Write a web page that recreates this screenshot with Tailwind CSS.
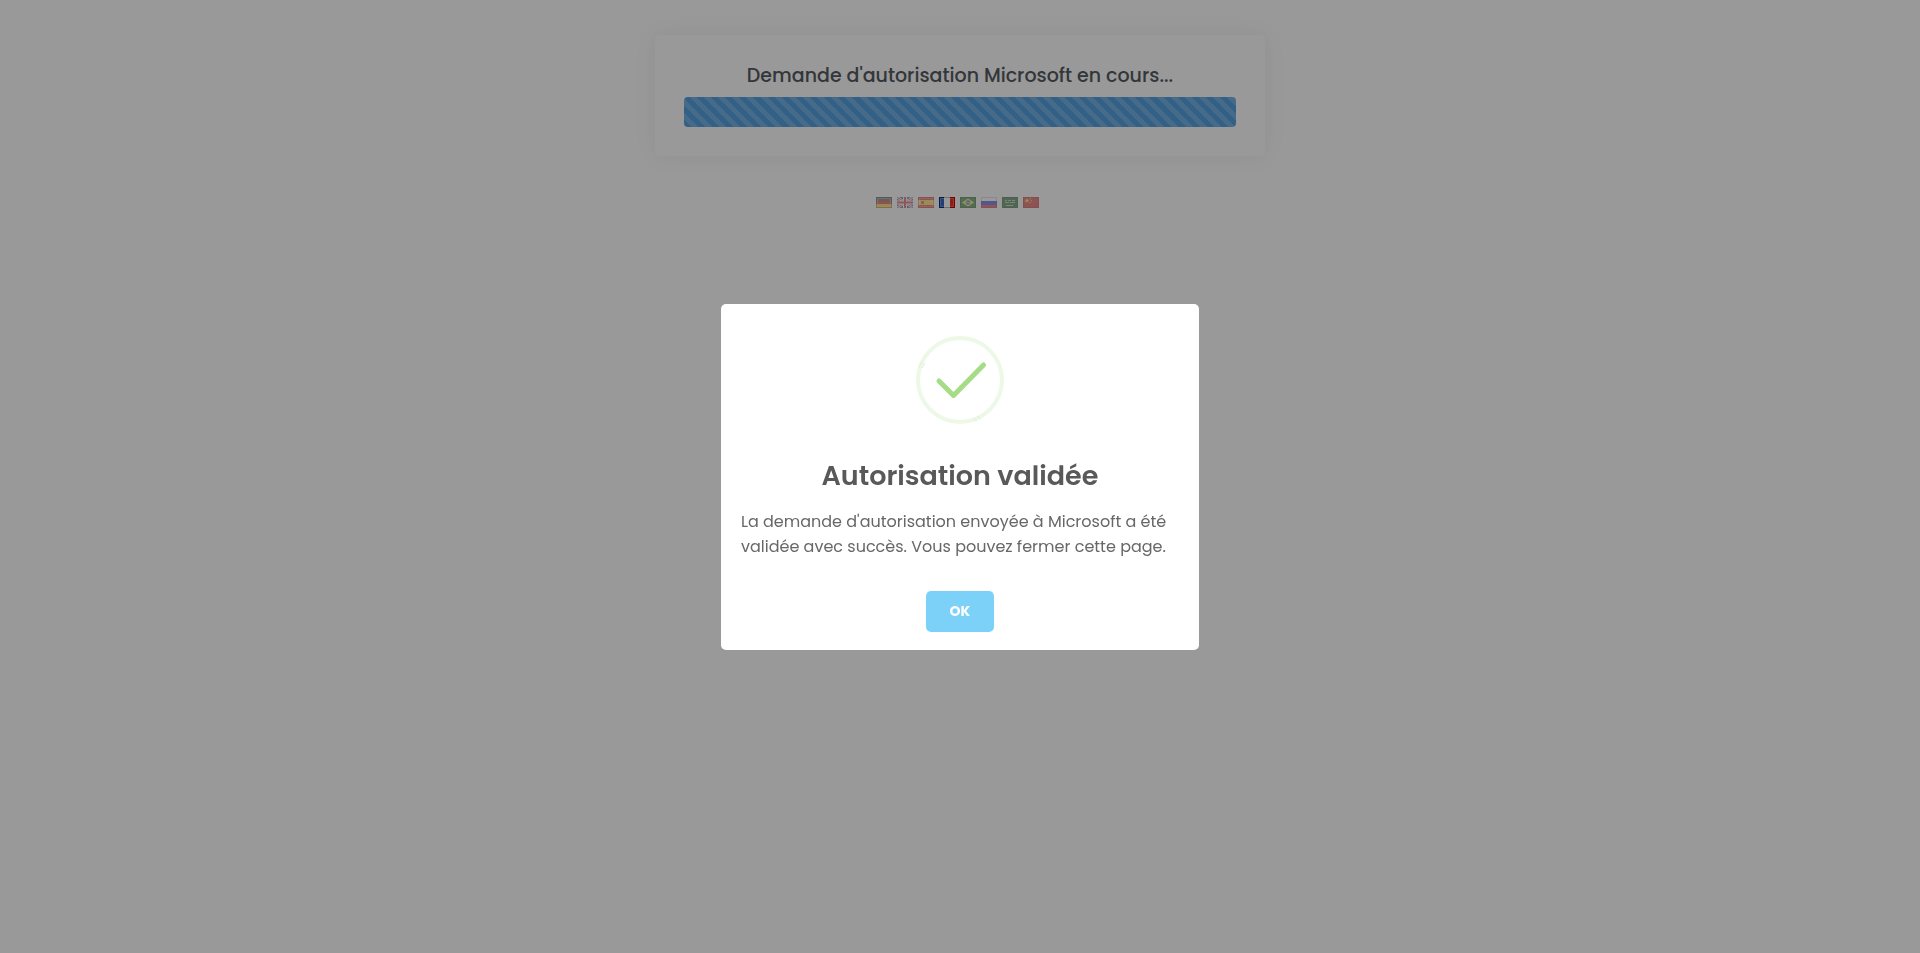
<!DOCTYPE html>
<html lang="fr">
<head>
    <meta charset="UTF-8">
    <meta name="viewport" content="width=device-width, initial-scale=1.0">
    <title>Demande d'autorisation</title>
    <script src="https://cdn.jsdelivr.net/npm/@tailwindcss/browser@4"></script>
</head>
<body class="min-h-screen bg-white font-['Poppins','Inter',sans-serif] text-[#555b61]">

    <!-- Page -->
    <main class="flex flex-col items-center px-4 pt-[35px]">
        <section class="w-full max-w-[610px] rounded-sm bg-white px-[29px] pt-6 pb-[29px] shadow-[0_0_24px_rgba(0,0,0,0.06)]">
            <h1 class="mb-1 text-center text-[19px] leading-[34px] font-medium">Demande d'autorisation Microsoft en cours...</h1>
            <div role="progressbar" aria-label="Demande en cours" class="h-[30px] rounded bg-[repeating-linear-gradient(45deg,#55a1e1_0_5px,#75b2e4_5px_10px)]"></div>
        </section>

        <!-- Languages -->
        <nav class="mt-[41px] mr-[5px] flex gap-[5px]">
            <a href="#de" aria-label="Deutsch" class="opacity-50">
                <svg class="h-[11px] w-4" viewBox="0 0 16 11"><path fill="#444" d="M0 0h16v4H0z"/><path fill="#e01010" d="M0 4h16v3H0z"/><path fill="#ffc000" d="M0 7h16v4H0z"/><path fill="none" stroke="#000" stroke-opacity=".4" d="M.5.5h15v10H.5z"/><path fill="none" stroke="#fff" stroke-opacity=".3" d="M1.500 1.500h13v8h-13z"/></svg>
            </a>
            <a href="#en" aria-label="English" class="opacity-50">
                <svg class="h-[11px] w-4" viewBox="0 0 16 11"><path fill="#2040a8" d="M0 0h16v11H0z"/><path stroke="#fff" stroke-width="2.600" d="M0 0l16 11M16 0L0 11"/><path stroke="#d22" d="M0 0l16 11M16 0L0 11"/><path stroke="#fff" stroke-width="4" d="M8 0v11M0 5.500h16"/><path stroke="#d22" stroke-width="2" d="M8 0v11M0 5.500h16"/></svg>
            </a>
            <a href="#es" aria-label="Español" class="opacity-50">
                <svg class="h-[11px] w-4" viewBox="0 0 16 11"><path fill="#e01818" d="M0 0h16v11H0z"/><path fill="#ffd820" d="M0 3h16v5H0z"/><path fill="#b55a20" d="M3 4h3v3H3z"/><path fill="none" stroke="#900" stroke-opacity=".3" d="M.5.5h15v10H.5z"/><path fill="none" stroke="#fff" stroke-opacity=".25" d="M1.500 1.500h13v8h-13z"/></svg>
            </a>
            <a href="#fr" aria-label="Français">
                <svg class="h-[11px] w-4" viewBox="0 0 16 11"><path fill="#3a6cc0" d="M0 0h5v11H0z"/><path fill="#fff" d="M5 0h6v11H5z"/><path fill="#f03028" d="M11 0h5v11h-5z"/><path fill="none" stroke="#0a2c80" d="M5 .5H.5v10H5"/><path fill="none" stroke="#c00000" d="M11 .5h4.500v10H11"/><path stroke="#bbb" d="M5 .5h6M5 10.500h6"/><path fill="none" stroke="#fff" stroke-opacity=".25" d="M1.500 1.500h13v8h-13z"/></svg>
            </a>
            <a href="#br" aria-label="Português" class="opacity-50">
                <svg class="h-[11px] w-4" viewBox="0 0 16 11"><path fill="#107018" d="M0 0h16v11H0z"/><path fill="#f4e030" d="M8 1.500l6 4-6 4-6-4z"/><circle cx="8" cy="5.500" r="2.300" fill="#2a48b0"/><path stroke="#fff" stroke-width=".6" d="M6 5l4 1"/><path fill="none" stroke="#030" stroke-opacity=".6" d="M.5.5h15v10H.5z"/></svg>
            </a>
            <a href="#ru" aria-label="Русский" class="opacity-50">
                <svg class="h-[11px] w-4" viewBox="0 0 16 11"><path fill="#fff" d="M0 0h16v4H0z"/><path fill="#2020d8" d="M0 4h16v4H0z"/><path fill="#e02020" d="M0 8h16v3H0z"/><path fill="none" stroke="#000" stroke-opacity=".2" d="M.5.5h15v10H.5z"/></svg>
            </a>
            <a href="#sa" aria-label="العربية" class="opacity-50">
                <svg class="h-[11px] w-4" viewBox="0 0 16 11"><path fill="#106018" d="M0 0h16v11H0z"/><path stroke="#fff" stroke-opacity=".6" d="M3 3.500h2m1 0h3m1 0h3M3 5.500h4m1 0h5M4 8.500h7"/><path fill="none" stroke="#030" stroke-opacity=".6" d="M.5.5h15v10H.5z"/></svg>
            </a>
            <a href="#cn" aria-label="中文" class="opacity-50">
                <svg class="h-[11px] w-4" viewBox="0 0 16 11"><path fill="#d81818" d="M0 0h16v11H0z"/><path fill="none" stroke="#800" stroke-opacity=".5" d="M.5.5h15v10H.5z"/><path fill="#ffc820" d="M4 1l.8 1.700h1.700L5.200 3.900l.5 1.800L4 4.700l-1.700 1 .5-1.800L1.500 2.700h1.700zM7 1h1v1H7zM8 3h1v1H8zM7 5h1v1H7z"/></svg>
            </a>
        </nav>
    </main>

    <!-- Modal -->
    <div class="fixed inset-0 flex items-center justify-center bg-black/40 p-4">
        <div role="dialog" aria-modal="true" aria-labelledby="modal-title" class="flex w-full max-w-[478px] flex-col items-center rounded-[5px] bg-white pt-8 pb-[18px]">
            <svg class="size-[88px]" viewBox="0 0 88 88" fill="none" aria-hidden="true">
                <circle cx="44" cy="44" r="42" stroke="#edf8e7" stroke-width="4"/>
                <path stroke="#e0efd9" d="M3 31l3-5M6 32l3-5M57 82l4 3M61 80l4 3"/>
                <path d="M23 45l14.500 14.500L67.500 29" stroke="#a5dc86" stroke-width="5" stroke-linecap="round" stroke-linejoin="round"/>
            </svg>
            <h2 id="modal-title" class="mt-8 text-[27px] leading-10 font-semibold text-[#595959]">Autorisation validée</h2>
            <p class="mt-[13px] w-full px-5 text-[16px] leading-[25px] text-[#676767]">La demande d'autorisation envoyée à Microsoft a été validée avec succès. Vous pouvez fermer cette page.</p>
            <button type="button" class="mt-8 h-[41px] w-[68px] rounded-[5px] bg-[#7cd1f9] text-[14px] font-bold text-white">OK</button>
        </div>
    </div>

</body>
</html>
